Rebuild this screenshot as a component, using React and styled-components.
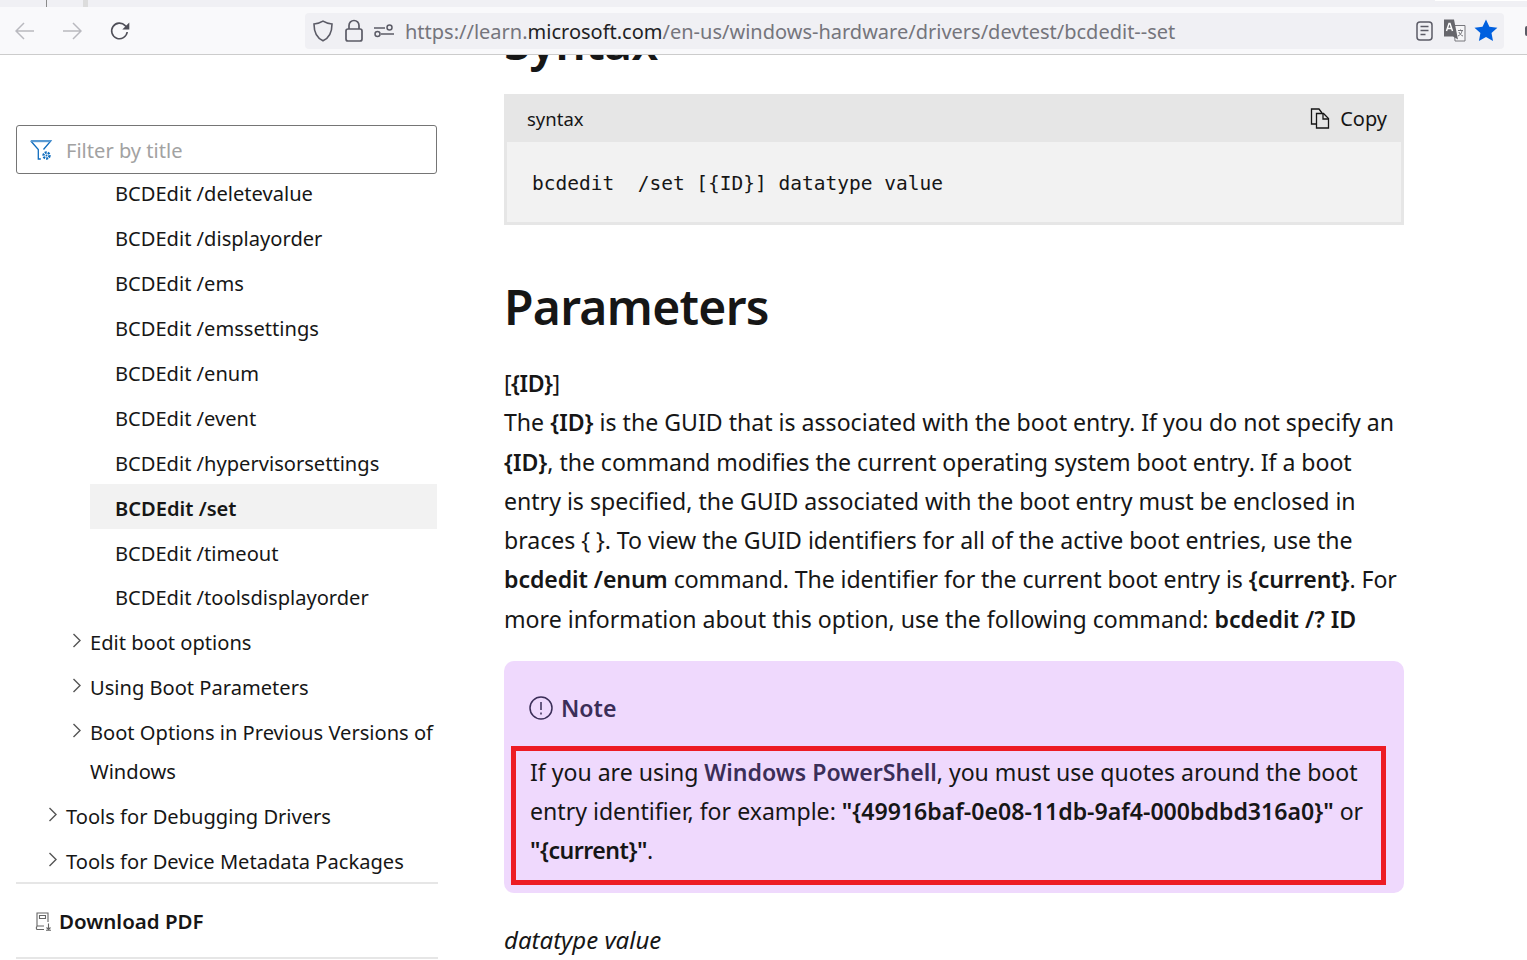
import React from "react";
import styled, { createGlobalStyle } from "styled-components";

const GlobalStyle = createGlobalStyle`
  html, body {
    margin: 0;
    padding: 0;
    height: 100%;
    overflow: hidden;
    background: #fff;
  }
  * { box-sizing: border-box; }
`;

const uiFont = `"Noto Sans", "Open Sans", sans-serif`;

const Page = styled.div`
  display: flex;
  flex-direction: column;
  height: 960px;
  overflow: hidden;
  font-family: ${uiFont};
  color: #161616;
`;

/* browser chrome */
const TabStrip = styled.div`
  display: flex;
  height: 7px;
  background: #f0f0f4;
  flex: none;
`;

const TabDivider = styled.div`
  width: 1px;
  height: 7px;
  margin-left: 46px;
  background: #8a8a8a;
`;

const TabEdge = styled.div`
  width: 5px;
  height: 7px;
  margin-left: 36px;
  background: #dcdcdc;
`;

const TabSheet = styled.div`
  width: 92px;
  height: 1px;
  margin-left: auto;
  background: #fff;
`;

const Toolbar = styled.div`
  display: flex;
  align-items: center;
  height: 48px;
  flex: none;
  padding-left: 15px;
  background: #f9f9fb;
  border-bottom: 1px solid #cccccc;
`;

const NavButton = styled.div`
  display: flex;
  width: ${(p) => p.$w}px;
  flex: none;
`;

const UrlBar = styled.div`
  display: flex;
  align-items: center;
  width: 1199px;
  height: 36px;
  margin-left: 175px;
  padding: 0 6px 0 8px;
  background: #f0f0f4;
  border-radius: 4px;
  flex: none;
`;

const UrlIcon = styled.div`
  display: flex;
  flex: none;
  margin-right: ${(p) => p.$gap || 0}px;
`;

const UrlText = styled.div`
  flex: 1;
  padding-top: 2px;
  font-size: 20px;
  white-space: nowrap;
  color: #75757c;
`;

const UrlHost = styled.span`
  color: #1f1f24;
`;

const CutIcon = styled.div`
  width: 2px;
  height: 10px;
  flex: none;
  margin-left: 21px;
  border-radius: 3px 0 0 3px;
  background: #5b5b66;
`;

/* page */
const Main = styled.div`
  display: flex;
  flex: 1;
  min-height: 0;
  overflow: hidden;
  background: #fff;
`;

const Sidebar = styled.aside`
  display: flex;
  flex-direction: column;
  flex: none;
  width: 421px;
  margin-left: 16px;
  padding-top: 70px;
`;

const Filter = styled.div`
  display: flex;
  align-items: center;
  height: 49px;
  flex: none;
  padding: 1px 0 0 13px;
  gap: 13px;
  border: 1px solid #757575;
  border-radius: 3px;
  background: #fff;
  font-size: 20.1px;
  color: #a2a2a2;
  position: relative;
  z-index: 1;
`;

const TocList = styled.ul`
  list-style: none;
  margin: -5px 0 0;
  padding: 0;
`;

const TocItem = styled.li`
  display: flex;
  align-items: flex-start;
  position: relative;
  height: ${(p) => (p.$wrap ? 84 : p.$short ? 44 : 45)}px;
  margin-left: ${(p) => p.$indent}px;
  padding-left: ${(p) => p.$pad || 0}px;
  padding-top: 5px;
  font-size: 20.1px;
  line-height: 39px;
  font-weight: ${(p) => (p.$active ? 600 : 400)};
  background: ${(p) => (p.$active ? "#f2f2f2" : "transparent")};
  white-space: nowrap;
`;

const Chevron = styled.svg`
  position: absolute;
  left: -18px;
  top: 15px;
`;

const TocFooter = styled.div`
  display: flex;
  align-items: center;
  gap: 7px;
  height: 77px;
  margin-right: -1px;
  padding: 1px 0 0 18px;
  border-top: 2px solid #e6e6e6;
  border-bottom: 2px solid #e6e6e6;
  font-size: 20.5px;
  font-weight: 600;
`;

const Article = styled.main`
  flex: none;
  width: 900px;
  margin-left: 67px;
`;

const Heading = styled.h2`
  margin: -46px 0 0;
  height: 85px;
  font-size: 48px;
  line-height: 66px;
  letter-spacing: -0.7px;
  font-weight: 600;
  color: #161616;
`;

const CodeBlock = styled.div`
  background: #e6e6e6;
  padding: 0 3px 3px;
`;

const CodeHeader = styled.div`
  display: flex;
  align-items: center;
  justify-content: space-between;
  height: 48px;
  padding: 1px 14px 0 20px;
  font-size: 20px;
`;

const CodeLabel = styled.span`
  font-size: 18.5px;
`;

const CopyButton = styled.div`
  display: flex;
  align-items: center;
  gap: 10px;
`;

const CodeBody = styled.pre`
  margin: 0;
  height: 80px;
  padding: 0 25px;
  background: #f2f2f2;
  font-family: "DejaVu Sans Mono", "Liberation Mono", monospace;
  font-size: 19.5px;
  line-height: 84px;
`;

const BigHeading = styled.h2`
  margin: 46px 0 0;
  height: 72px;
  font-size: 48px;
  line-height: 72px;
  letter-spacing: -0.7px;
  font-weight: 600;
`;

const Paragraph = styled.div`
  margin-top: ${(p) => p.$top || 0}px;
  font-size: 23.1px;
  line-height: 39.3px;
  white-space: nowrap;
`;

const Line = styled.div`
  letter-spacing: ${(p) => p.$ls || 0}px;
`;

const Strong = styled.strong`
  font-weight: 600;
`;

const NoteBox = styled.div`
  margin-top: 22px;
  height: 232px;
  padding: 26px 18px 0 7px;
  border-radius: 10px;
  background: #efd9fd;
`;

const NoteTitle = styled.div`
  display: flex;
  align-items: center;
  gap: 8px;
  height: 42px;
  padding-left: 18px;
  font-size: 23.1px;
  font-weight: 600;
  color: #3b2e58;
`;

const Highlight = styled.div`
  margin-top: 17px;
  height: 139px;
  padding: 2px 0 0 14px;
  border: 5px solid #ed1c24;
  font-size: 23.1px;
  line-height: 39px;
  white-space: nowrap;
`;

const NoteLink = styled.span`
  font-weight: 600;
  color: #3b2e58;
`;

const Term = styled.div`
  margin-top: 27px;
  font-size: 24px;
  line-height: 39px;
  font-style: italic;
`;

const ArrowIcon = ({ flip }) => (
  <svg width="20" height="20" viewBox="0 0 20 20" fill="none" stroke="#b9b9bf" strokeWidth="1.5" style={flip ? { transform: "scaleX(-1)" } : undefined}>
    <path d="M1 10h18M9 2l-8 8 8 8" />
  </svg>
);

const ReloadIcon = () => (
  <svg width="20" height="20" viewBox="0 0 20 20" fill="none">
    <path d="M17.2 11a7.8 7.8 0 1 1-2-6.4L18 7" stroke="#4f4f58" strokeWidth="1.6" />
    <path d="M19.3 1.4v7h-7z" fill="#4f4f58" />
  </svg>
);

const ShieldIcon = () => (
  <svg width="20" height="22" viewBox="0 0 20 22" fill="none" stroke="#5b5b66" strokeWidth="1.6">
    <path d="M10 1.2c2.5 1.6 5.5 2.6 9 2.8 0 8-2.5 13.800-9 16.800C3.500 17.800 1 12 1 4c3.500-.2 6.500-1.200 9-2.800z" />
  </svg>
);

const LockIcon = () => (
  <svg width="18" height="23" viewBox="0 0 18 23" fill="none" stroke="#5b5b66" strokeWidth="1.7">
    <rect x="1" y="10" width="16" height="12" rx="2" />
    <path d="M4 10V6.500a5 5 0 0 1 10 0V10" />
  </svg>
);

const PermissionsIcon = () => (
  <svg width="20" height="14" viewBox="0 0 20 14" fill="none" stroke="#5b5b66" strokeWidth="1.5">
    <circle cx="15.500" cy="3.500" r="2.500" />
    <circle cx="3.500" cy="10" r="2.500" />
    <path d="M0 4h11M7 10h13" />
  </svg>
);

const ReaderIcon = () => (
  <svg width="17" height="20" viewBox="0 0 17 20" fill="none" stroke="#5b5b66" strokeWidth="1.5">
    <rect x="1" y="1" width="15" height="18" rx="3" />
    <path d="M4.500 5.500h8M4.500 9.500h8M4.500 13.500h5" />
  </svg>
);

const TranslateIcon = () => (
  <svg width="23" height="23" viewBox="0 0 23 23">
    <path d="M11 6.500h11v15.500h-10z" fill="#f6f6f8" stroke="#77777d" strokeWidth="1" />
    <path d="M1 0.500h10l4 20-5-3H1z" fill="#66666c" />
    <path d="M3.500 12l2.500-7.500h1L9.500 12M4.500 9.500h4" fill="none" stroke="#fff" strokeWidth="1.400" />
    <path d="M15 11.500h5M17.500 10.500v1.500M19 12c-.500 2.500-2 4-4 5M16 13c.500 1.800 2 3.400 4 4" fill="none" stroke="#77777d" strokeWidth="1" />
  </svg>
);

const StarIcon = () => (
  <svg width="24" height="23" viewBox="0 0 24 23">
    <path d="M12 .500l3.400 7.200 8 1-5.900 5.400 1.500 7.900L12 18.100 4.900 22l1.500-7.900L.500 8.700l8-1z" fill="#0060df" />
  </svg>
);

const FilterIcon = () => (
  <svg width="23" height="21" viewBox="0 0 23 21" fill="none" style={{ flex: "none" }}>
    <path d="M.800 1h20L13.500 9.500M.800 1l7.500 8.500V19h2.500" stroke="#0f6cbd" strokeWidth="1.300" />
    <path d="M1 1.200h19.500" stroke="#5a9bd4" strokeWidth="2" />
    <circle cx="16.500" cy="15.500" r="3" stroke="#0f6cbd" strokeWidth="2.400" strokeDasharray="2 1" />
    <circle cx="16.500" cy="15.500" r="1" fill="#0f6cbd" />
  </svg>
);

const ChevronIcon = () => (
  <Chevron width="10" height="15" viewBox="0 0 10 15" fill="none" stroke="#555" strokeWidth="1.400">
    <path d="M1.500 1l6.500 6.500L1.500 14" />
  </Chevron>
);

const PdfIcon = () => (
  <svg width="18" height="19" viewBox="0 0 18 19" fill="none" stroke="#666" strokeWidth="1.100" style={{ flex: "none" }}>
    <path d="M3 14.500V1h11v9" />
    <path d="M3 14.500a2 2 0 0 0 0 3h7" />
    <path d="M5.500 3.500h6v3h-6zM3 14h7M14.500 11.500v6M12.500 15.500l2 2 2-2M12 18.300h5" />
  </svg>
);

const CopyIcon = () => (
  <svg width="20" height="21" viewBox="0 0 20 21" fill="none" stroke="#161616" strokeWidth="1.300">
    <path d="M7 16H1.500V1H9l3 4" />
    <path d="M6.500 5.500h7l5 5v9.500h-12z" />
    <path d="M13 5.500V11h5.500" />
  </svg>
);

const InfoIcon = () => (
  <svg width="24" height="24" viewBox="0 0 24 24" fill="none" stroke="#3b2e58" strokeWidth="1.500">
    <circle cx="12" cy="12" r="11" />
    <path d="M12 6v8M12 16.500v2" />
  </svg>
);

const tocItems = [
  { label: "BCDEdit /deletevalue", indent: 74, pad: 25 },
  { label: "BCDEdit /displayorder", indent: 74, pad: 25 },
  { label: "BCDEdit /ems", indent: 74, pad: 25 },
  { label: "BCDEdit /emssettings", indent: 74, pad: 25 },
  { label: "BCDEdit /enum", indent: 74, pad: 25 },
  { label: "BCDEdit /event", indent: 74, pad: 25 },
  { label: "BCDEdit /hypervisorsettings", indent: 74, pad: 25 },
  { label: "BCDEdit /set", indent: 74, pad: 25, active: true },
  { label: "BCDEdit /timeout", indent: 74, pad: 25, short: true },
  { label: "BCDEdit /toolsdisplayorder", indent: 74, pad: 25 },
  { label: "Edit boot options", indent: 74, chevron: true },
  { label: "Using Boot Parameters", indent: 74, chevron: true },
  { label: <>Boot Options in Previous Versions of<br />Windows</>, indent: 74, chevron: true, wrap: true },
  { label: "Tools for Debugging Drivers", indent: 50, chevron: true },
  { label: "Tools for Device Metadata Packages", indent: 50, chevron: true },
];

export default function App() {
  return (
    <Page>
      <GlobalStyle />
      <TabStrip>
        <TabDivider />
        <TabEdge />
        <TabSheet />
      </TabStrip>
      <Toolbar>
        <NavButton $w={47}><ArrowIcon /></NavButton>
        <NavButton $w={48}><ArrowIcon flip /></NavButton>
        <NavButton $w={20}><ReloadIcon /></NavButton>
        <UrlBar>
          <UrlIcon $gap={12}><ShieldIcon /></UrlIcon>
          <UrlIcon $gap={11}><LockIcon /></UrlIcon>
          <UrlIcon $gap={11}><PermissionsIcon /></UrlIcon>
          <UrlText>
            https://learn.<UrlHost>microsoft.com</UrlHost>/en-us/windows-hardware/drivers/devtest/bcdedit--set
          </UrlText>
          <UrlIcon $gap={10}><ReaderIcon /></UrlIcon>
          <UrlIcon $gap={8}><TranslateIcon /></UrlIcon>
          <UrlIcon><StarIcon /></UrlIcon>
        </UrlBar>
        <CutIcon />
      </Toolbar>
      <Main>
        <Sidebar>
          <Filter>
            <FilterIcon />
            Filter by title
          </Filter>
          <TocList>
            {tocItems.map((item, i) => (
              <TocItem key={i} $indent={item.indent} $pad={item.pad} $active={item.active} $wrap={item.wrap} $short={item.short}>
                {item.chevron && <ChevronIcon />}
                <span>{item.label}</span>
              </TocItem>
            ))}
          </TocList>
          <TocFooter>
            <PdfIcon />
            Download PDF
          </TocFooter>
        </Sidebar>
        <Article>
          <Heading>Syntax</Heading>
          <CodeBlock>
            <CodeHeader>
              <CodeLabel>syntax</CodeLabel>
              <CopyButton>
                <CopyIcon />
                Copy
              </CopyButton>
            </CodeHeader>
            <CodeBody>bcdedit  /set [{"{ID}"}] datatype value</CodeBody>
          </CodeBlock>
          <BigHeading>Parameters</BigHeading>
          <Paragraph $top={21}>
            <Line $ls={-0.5}>[<Strong>{"{ID}"}</Strong>]</Line>
            <Line>The <Strong>{"{ID}"}</Strong> is the GUID that is associated with the boot entry. If you do not specify an</Line>
            <Line $ls={-0.04}><Strong>{"{ID}"}</Strong>, the command modifies the current operating system boot entry. If a boot</Line>
            <Line $ls={-0.01}>entry is specified, the GUID associated with the boot entry must be enclosed in</Line>
            <Line $ls={-0.03}>braces {"{ }"}. To view the GUID identifiers for all of the active boot entries, use the</Line>
            <Line $ls={-0.08}><Strong>bcdedit /enum</Strong> command. The identifier for the current boot entry is <Strong>{"{current}"}</Strong>. For</Line>
            <Line>more information about this option, use the following command: <Strong>bcdedit /? ID</Strong></Line>
          </Paragraph>
          <NoteBox>
            <NoteTitle>
              <InfoIcon />
              Note
            </NoteTitle>
            <Highlight>
              <Line $ls={-0.02}>If you are using <NoteLink>Windows PowerShell</NoteLink>, you must use quotes around the boot</Line>
              <Line>entry identifier, for example: <Strong>"{"{49916baf-0e08-11db-9af4-000bdbd316a0}"}"</Strong> or</Line>
              <Line $ls={-0.5}><Strong>"{"{current}"}"</Strong>.</Line>
            </Highlight>
          </NoteBox>
          <Term>datatype value</Term>
        </Article>
      </Main>
    </Page>
  );
}
